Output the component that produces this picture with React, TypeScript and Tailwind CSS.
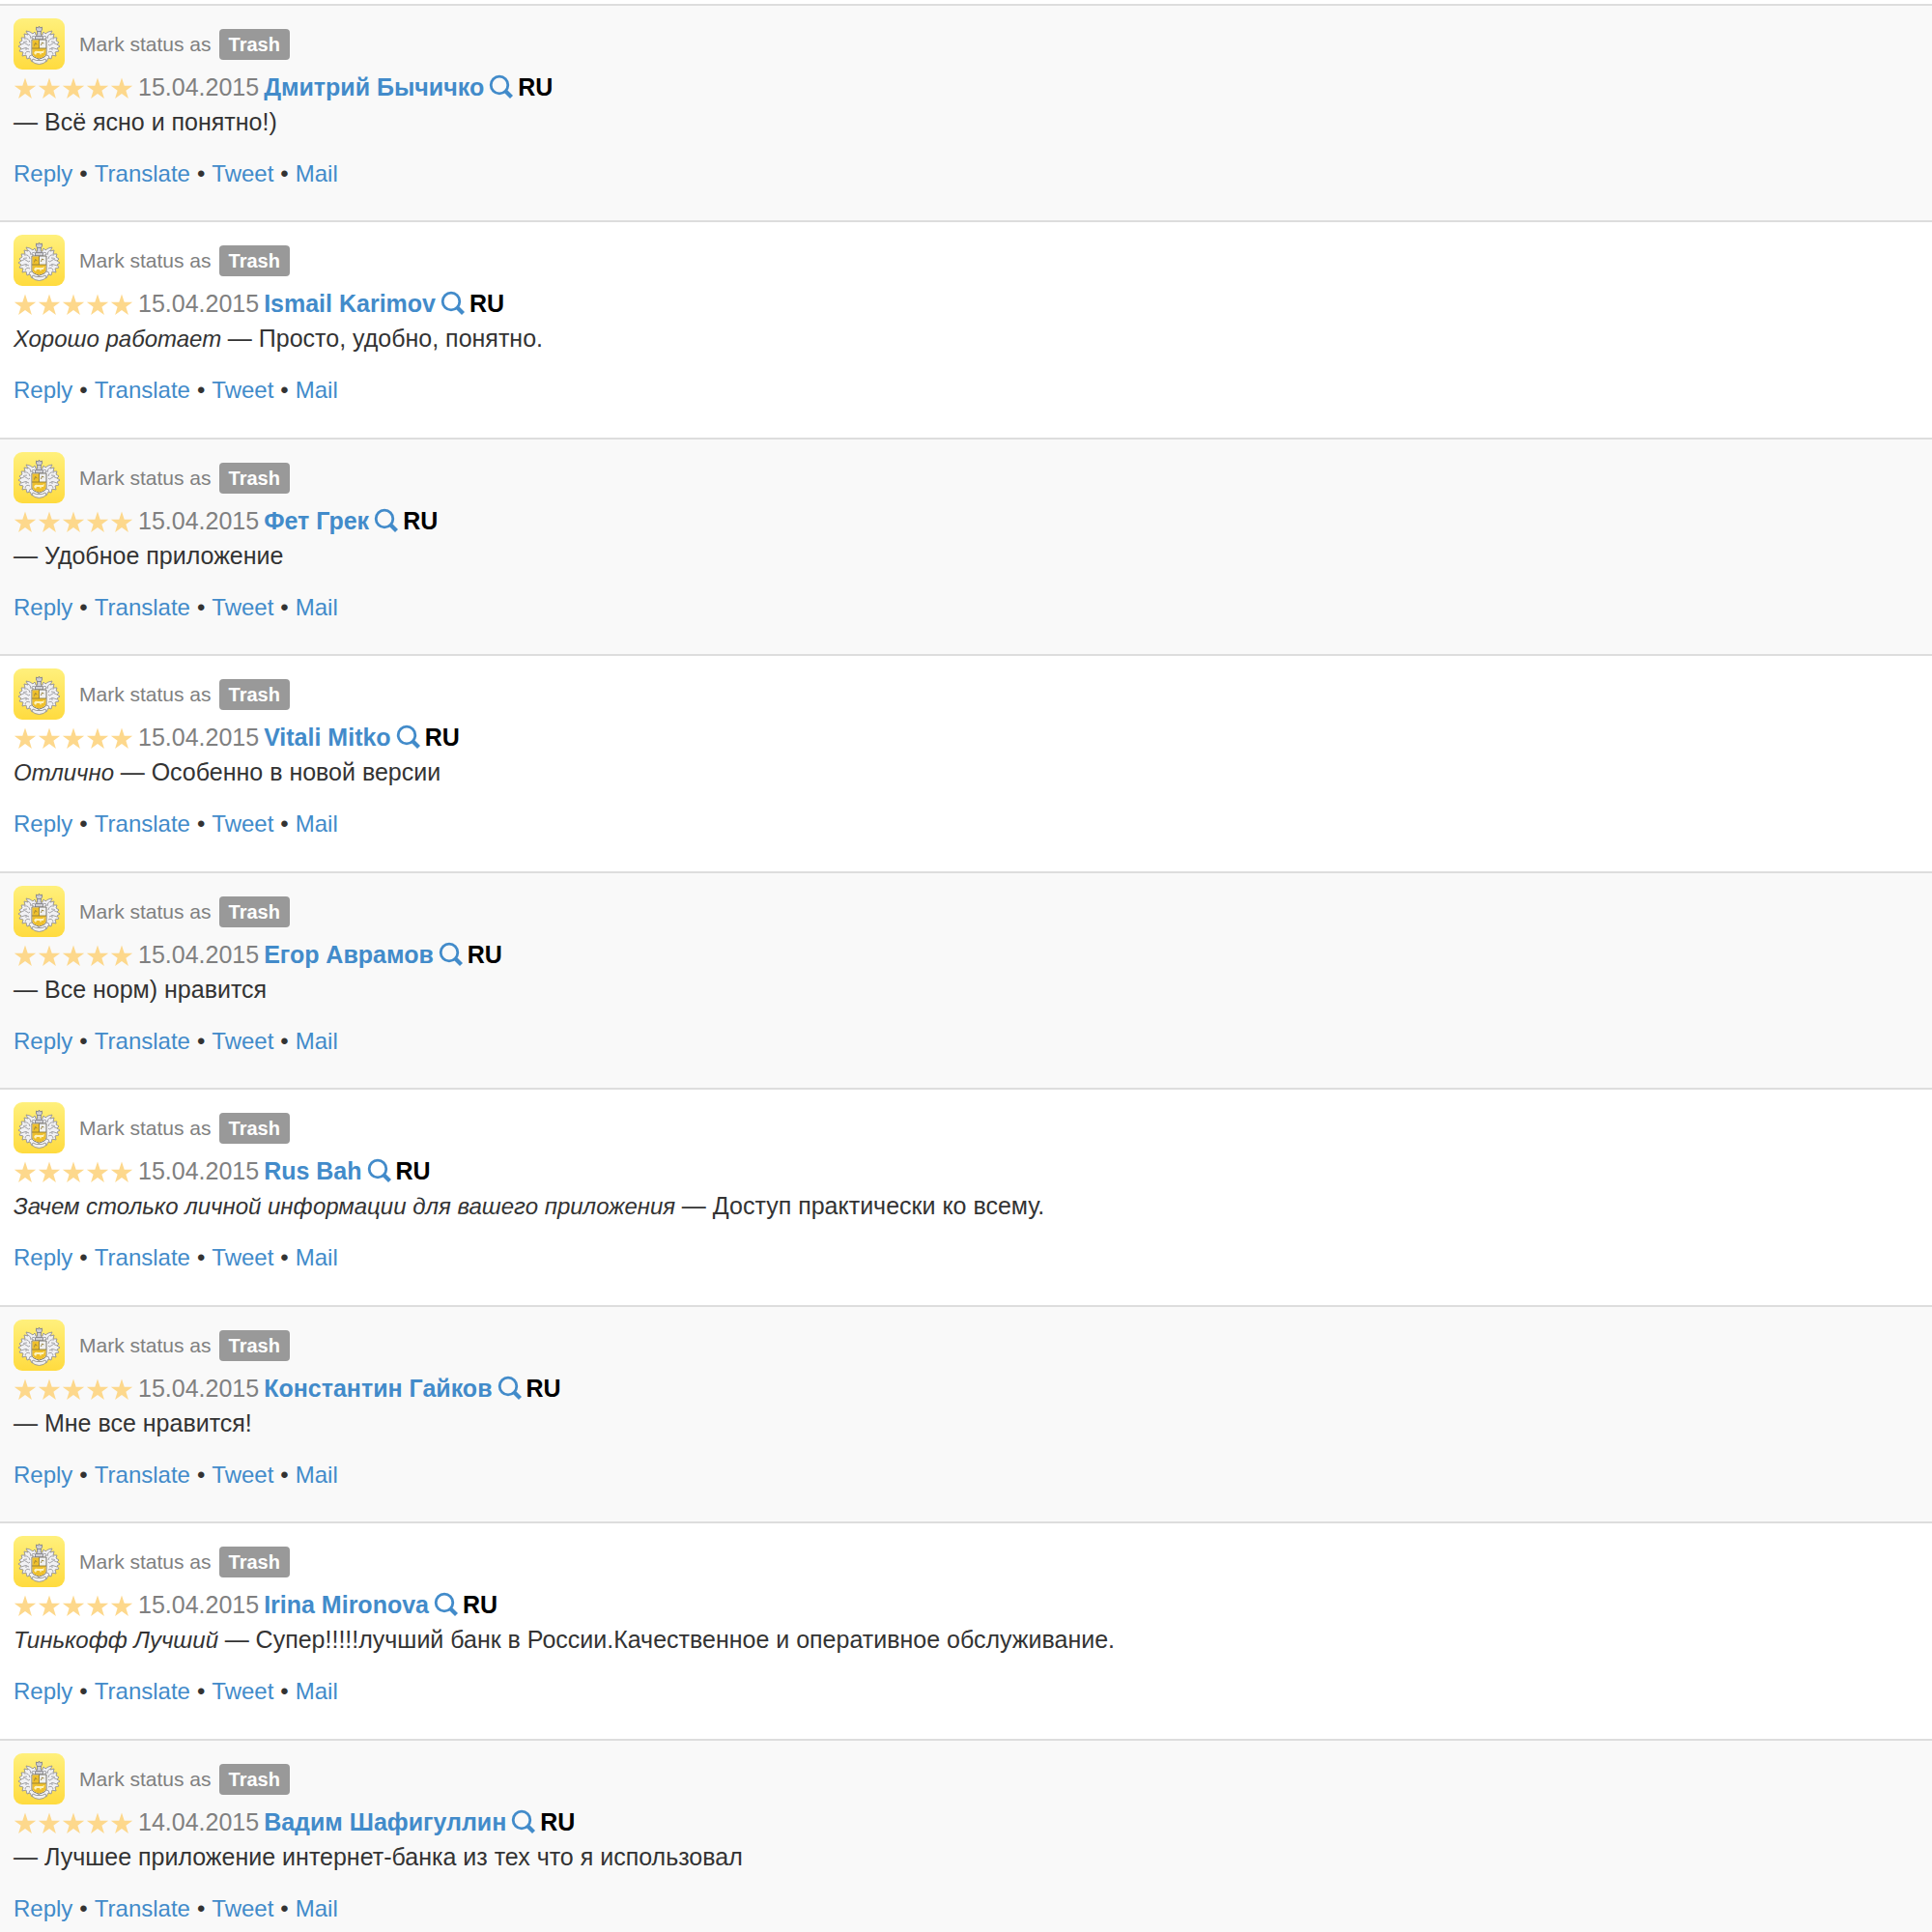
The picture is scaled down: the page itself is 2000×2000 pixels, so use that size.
type Review = {
  date: string;
  author: string;
  title?: string;
  text: string;
};

const reviews: Review[] = [
  { date: '15.04.2015', author: 'Дмитрий Бычичко', text: 'Всё ясно и понятно!)' },
  { date: '15.04.2015', author: 'Ismail Karimov', title: 'Хорошо работает', text: 'Просто, удобно, понятно.' },
  { date: '15.04.2015', author: 'Фет Грек', text: 'Удобное приложение' },
  { date: '15.04.2015', author: 'Vitali Mitko', title: 'Отлично', text: 'Особенно в новой версии' },
  { date: '15.04.2015', author: 'Егор Аврамов', text: 'Все норм) нравится' },
  {
    date: '15.04.2015',
    author: 'Rus Bah',
    title: 'Зачем столько личной информации для вашего приложения',
    text: 'Доступ практически ко всему.',
  },
  { date: '15.04.2015', author: 'Константин Гайков', text: 'Мне все нравится!' },
  {
    date: '15.04.2015',
    author: 'Irina Mironova',
    title: 'Тинькофф Лучший',
    text: 'Супер!!!!!лучший банк в России.Качественное и оперативное обслуживание.',
  },
  { date: '14.04.2015', author: 'Вадим Шафигуллин', text: 'Лучшее приложение интернет-банка из тех что я использовал' },
];

const actions = ['Reply', 'Translate', 'Tweet', 'Mail'];

function AppIcon() {
  return (
    <svg viewBox="0 0 53 53" className="h-[53px] w-[53px] shrink-0" role="img" aria-label="App icon">
      <defs>
        <linearGradient id="tile" x1="0" y1="0" x2="0" y2="1">
          <stop offset="0" stopColor="#fff07c" />
          <stop offset="1" stopColor="#ffdb3f" />
        </linearGradient>
      </defs>
      <rect width="53" height="53" rx="9" fill="url(#tile)" />
      {/* leaves, one side mirrored onto the other */}
      {[1, -1].map((side) => (
        <g key={side} transform={side === 1 ? undefined : 'translate(53 0) scale(-1 1)'}>
          <path
            d="M27 18l-4-1-1-3-2 2-3-2-4-1 2 4-4-1 1 4-4 0 1 3-3 2 2 2-3 2 3 2-2 3 4 1-1 4 4-1 1 4 3-1 2 4 3-1 5 1z"
            fill="#f1f1f4"
            stroke="#929196"
            strokeWidth="0.9"
            strokeLinejoin="round"
          />
          <path
            d="M24 20q-3-3-5-1q-1 2 2 2M15 16q3 1 3 5M11 21q5-1 6 4M8 27q4-3 6 0q2 2 3 0M8 32q5-3 8 0M12 37q1-4 5-2M16 41q0-3 3-3M14 24q-3 0-4 1M13 30v3"
            fill="none"
            stroke="#99989d"
            strokeWidth="0.9"
          />
        </g>
      ))}
      <path
        d="M23.500 9l2 1 1-2 1 2 2-1v3l-1 1v4l2 2v3h-8v-3l2-2v-4l-1-1z"
        fill="#cfcfd4"
        stroke="#86858a"
        strokeWidth="0.900"
      />
      <path d="M24 13.500h5M23 18.500h7" stroke="#86858a" strokeWidth="0.900" />
      <path
        d="M20 42l3.500 1.500h6l3.500-1.500 1 2-3 2.500-4.500 1-4.500-1-3-2.500z"
        fill="#f0f0f0"
        stroke="#95948f"
        strokeWidth="0.900"
      />
      <path d="M19 22h15v15q0 3-7.500 5q-7.500-2-7.500-5z" fill="#f1f1f1" stroke="#77746c" strokeWidth="1" />
      <path d="M19.500 22.500h7v8.500h7v6q-1 3-7 4.500q-6-1.500-7-4.500z" fill="#efc02b" />
      <path d="M21 36q1-3 4-2l5 0 2-1-1 3-2 0-1 2-1-2h-3l-1 2z" fill="#fdf3bd" />
      <path
        d="M26.500 22v9M19 31h15M21.500 28.500l1-3 2 1.500M28.500 28l1-3 2 1"
        fill="none"
        stroke="#917d35"
        strokeWidth="0.900"
      />
    </svg>
  );
}

function Stars() {
  return (
    <span role="img" aria-label="5 stars" className="mr-1 flex pt-[2px]">
      {[0, 1, 2, 3, 4].map((n) => (
        <svg key={n} viewBox="0 0 25 25" className="h-[25px] w-[25px]" fill="#fdd88c">
          <path d="M12 1.500l2.700 8.200h8.500l-6.800 5 2.500 8.300-6.900-5-6.900 5 2.500-8.300-6.800-5h8.500z" />
        </svg>
      ))}
    </span>
  );
}

function SearchIcon() {
  return (
    <svg viewBox="0 0 26 26" className="h-[26px] w-[26px]" fill="none" stroke="#428bca">
      <circle cx="11" cy="11" r="8.800" strokeWidth="2.800" />
      <path d="M17.500 17.500l6 6" strokeWidth="4.200" />
    </svg>
  );
}

function ReviewRow({ review }: { review: Review }) {
  return (
    <li className="border-t-2 border-[#dddddd] px-[14px] pt-[13px] pb-[30px] odd:bg-[#f9f9f9] even:bg-white even:pb-[31px]">
      <div className="flex items-center">
        <AppIcon />
        <span className="ml-[15px] text-[21px] text-[#808080]">Mark status as</span>
        <button
          type="button"
          className="ml-2 h-8 rounded bg-[#999999] px-[10px] text-xl leading-8 font-bold text-white"
        >
          Trash
        </button>
      </div>
      <div className="flex h-9 items-center">
        <Stars />
        <span className="text-[#808080]">{review.date}</span>
        <a href="#author" className="ml-[5px] font-bold text-[#428bca]">
          {review.author}
        </a>
        <a href="#search" aria-label={`Search ${review.author}`} className="ml-[5px]">
          <SearchIcon />
        </a>
        <span className="ml-1 font-bold text-black">RU</span>
      </div>
      <p className="h-[37px] leading-[37px]">
        {review.title && <em className="text-2xl leading-[37px]">{review.title} </em>}— {review.text}
      </p>
      <div className="mt-[17px] flex h-9 items-center gap-[7px] text-2xl leading-9">
        {actions.map((action, i) => (
          <span key={action} className="flex gap-[7px]">
            {i > 0 && <span>•</span>}
            <a href={`#${action.toLowerCase()}`} className="text-[#428bca]">
              {action}
            </a>
          </span>
        ))}
      </div>
    </li>
  );
}

export default function App() {
  return (
    <main className="bg-white pt-1 font-['Liberation_Sans',Arial,sans-serif] text-[25px] leading-9 text-[#333333]">
      <ul>
        {reviews.map((review) => (
          <ReviewRow key={review.author} review={review} />
        ))}
      </ul>
    </main>
  );
}
